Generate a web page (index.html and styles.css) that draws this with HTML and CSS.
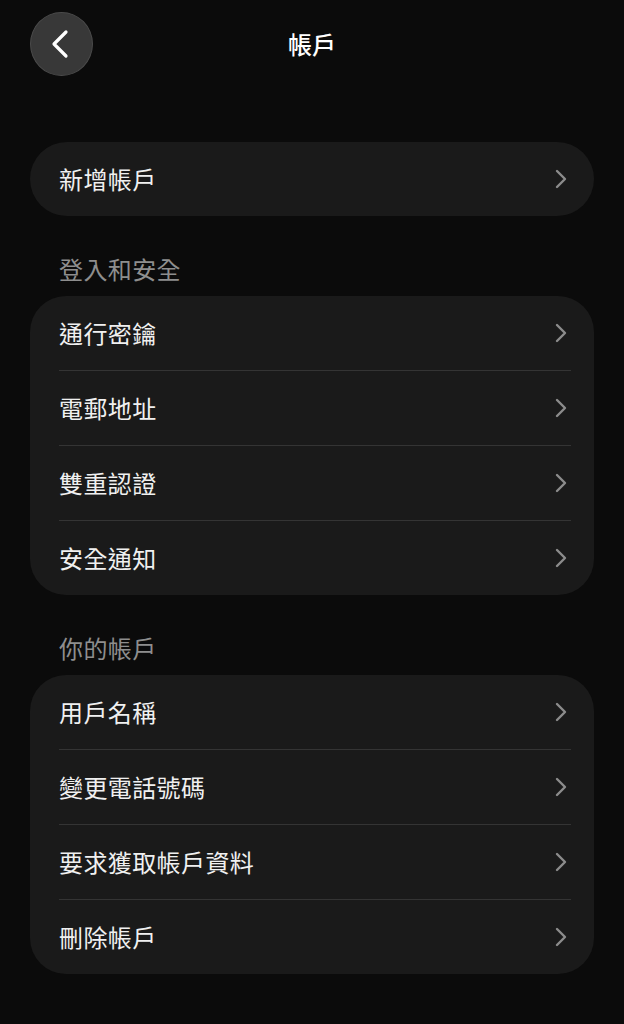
FILE: index.html
```html
<!DOCTYPE html>
<html lang="zh-Hant">
<head>
<meta charset="utf-8">
<title>帳戶</title>
<link rel="stylesheet" href="styles.css">
</head>
<body>
<div class="screen">
  <header class="topbar">
    <button class="back" aria-label="返回">
      <svg width="20" height="30" viewBox="0 0 20 30"><path d="M16 3 L4 15 L16 27" fill="none" stroke="#fff" stroke-width="3.2" stroke-linecap="round" stroke-linejoin="round"/></svg>
    </button>
    <h1 class="title">帳戶</h1>
  </header>

  <section class="card single">
    <div class="row"><div class="row-inner"><span>新增帳戶</span><svg class="chev" width="14" height="20" viewBox="0 0 14 20"><path d="M3 2 L11 10 L3 18" fill="none" stroke="#8c8c8c" stroke-width="2.4" stroke-linecap="round" stroke-linejoin="round"/></svg></div></div>
  </section>

  <h2 class="section-title">登入和安全</h2>
  <section class="card">
    <div class="row"><div class="row-inner"><span>通行密鑰</span><svg class="chev" width="14" height="20" viewBox="0 0 14 20"><path d="M3 2 L11 10 L3 18" fill="none" stroke="#8c8c8c" stroke-width="2.4" stroke-linecap="round" stroke-linejoin="round"/></svg></div></div>
    <div class="row"><div class="row-inner"><span>電郵地址</span><svg class="chev" width="14" height="20" viewBox="0 0 14 20"><path d="M3 2 L11 10 L3 18" fill="none" stroke="#8c8c8c" stroke-width="2.4" stroke-linecap="round" stroke-linejoin="round"/></svg></div></div>
    <div class="row"><div class="row-inner"><span>雙重認證</span><svg class="chev" width="14" height="20" viewBox="0 0 14 20"><path d="M3 2 L11 10 L3 18" fill="none" stroke="#8c8c8c" stroke-width="2.4" stroke-linecap="round" stroke-linejoin="round"/></svg></div></div>
    <div class="row"><div class="row-inner"><span>安全通知</span><svg class="chev" width="14" height="20" viewBox="0 0 14 20"><path d="M3 2 L11 10 L3 18" fill="none" stroke="#8c8c8c" stroke-width="2.4" stroke-linecap="round" stroke-linejoin="round"/></svg></div></div>
  </section>

  <h2 class="section-title">你的帳戶</h2>
  <section class="card">
    <div class="row"><div class="row-inner"><span>用戶名稱</span><svg class="chev" width="14" height="20" viewBox="0 0 14 20"><path d="M3 2 L11 10 L3 18" fill="none" stroke="#8c8c8c" stroke-width="2.4" stroke-linecap="round" stroke-linejoin="round"/></svg></div></div>
    <div class="row"><div class="row-inner"><span>變更電話號碼</span><svg class="chev" width="14" height="20" viewBox="0 0 14 20"><path d="M3 2 L11 10 L3 18" fill="none" stroke="#8c8c8c" stroke-width="2.4" stroke-linecap="round" stroke-linejoin="round"/></svg></div></div>
    <div class="row"><div class="row-inner"><span>要求獲取帳戶資料</span><svg class="chev" width="14" height="20" viewBox="0 0 14 20"><path d="M3 2 L11 10 L3 18" fill="none" stroke="#8c8c8c" stroke-width="2.4" stroke-linecap="round" stroke-linejoin="round"/></svg></div></div>
    <div class="row"><div class="row-inner"><span>刪除帳戶</span><svg class="chev" width="14" height="20" viewBox="0 0 14 20"><path d="M3 2 L11 10 L3 18" fill="none" stroke="#8c8c8c" stroke-width="2.4" stroke-linecap="round" stroke-linejoin="round"/></svg></div></div>
  </section>
</div>
</body>
</html>
```

FILE: styles.css
```css
* { box-sizing: border-box; }
html, body {
  margin: 0;
  padding: 0;
  background: #0b0b0b;
}
body {
  font-family: "Noto Sans CJK TC", "Noto Sans", sans-serif;
  color: #f2f2f2;
  width: 624px;
  min-height: 1024px;
}
.screen {
  padding: 12px 30px 0 30px;
  display: flex;
  flex-direction: column;
}
.topbar {
  display: grid;
  grid-template-columns: 63px 1fr 63px;
  align-items: center;
  height: 64px;
}
.back {
  width: 63px;
  height: 64px;
  border-radius: 50%;
  background: #383838;
  border: 1px solid #4a4a4a;
  display: flex;
  align-items: center;
  justify-content: center;
  padding: 0 4px 0 0;
  margin: 0;
}
.title {
  margin: 0;
  text-align: center;
  font-size: 24px;
  font-weight: 500;
  color: #ffffff;
  line-height: 30px;
}
.card {
  background: #1a1a1a;
  border-radius: 36px;
  display: flex;
  flex-direction: column;
}
.card.single {
  margin-top: 66px;
  border-radius: 37px;
}
.row {
  padding-left: 29px;
  height: 75px;
  display: flex;
}
.row-inner {
  flex: 1;
  display: flex;
  align-items: center;
  justify-content: space-between;
  margin-right: 23px;
  padding-right: 3px;
  border-bottom: 1px solid #343434;
  font-size: 24px;
  letter-spacing: 0.4px;
  line-height: 30px;
  color: #f0f0f0;
}
.card.single .row { height: 74px; }
.row:last-child .row-inner { border-bottom: none; }
.row:last-child { height: 74px; }
.chev { display: block; margin-bottom: 1px; }
.section-title {
  margin: 39px 0 13px 29px;
  font-size: 24px;
  letter-spacing: 0.4px;
  font-weight: 400;
  line-height: 28px;
  color: #8e8e8e;
}
```
